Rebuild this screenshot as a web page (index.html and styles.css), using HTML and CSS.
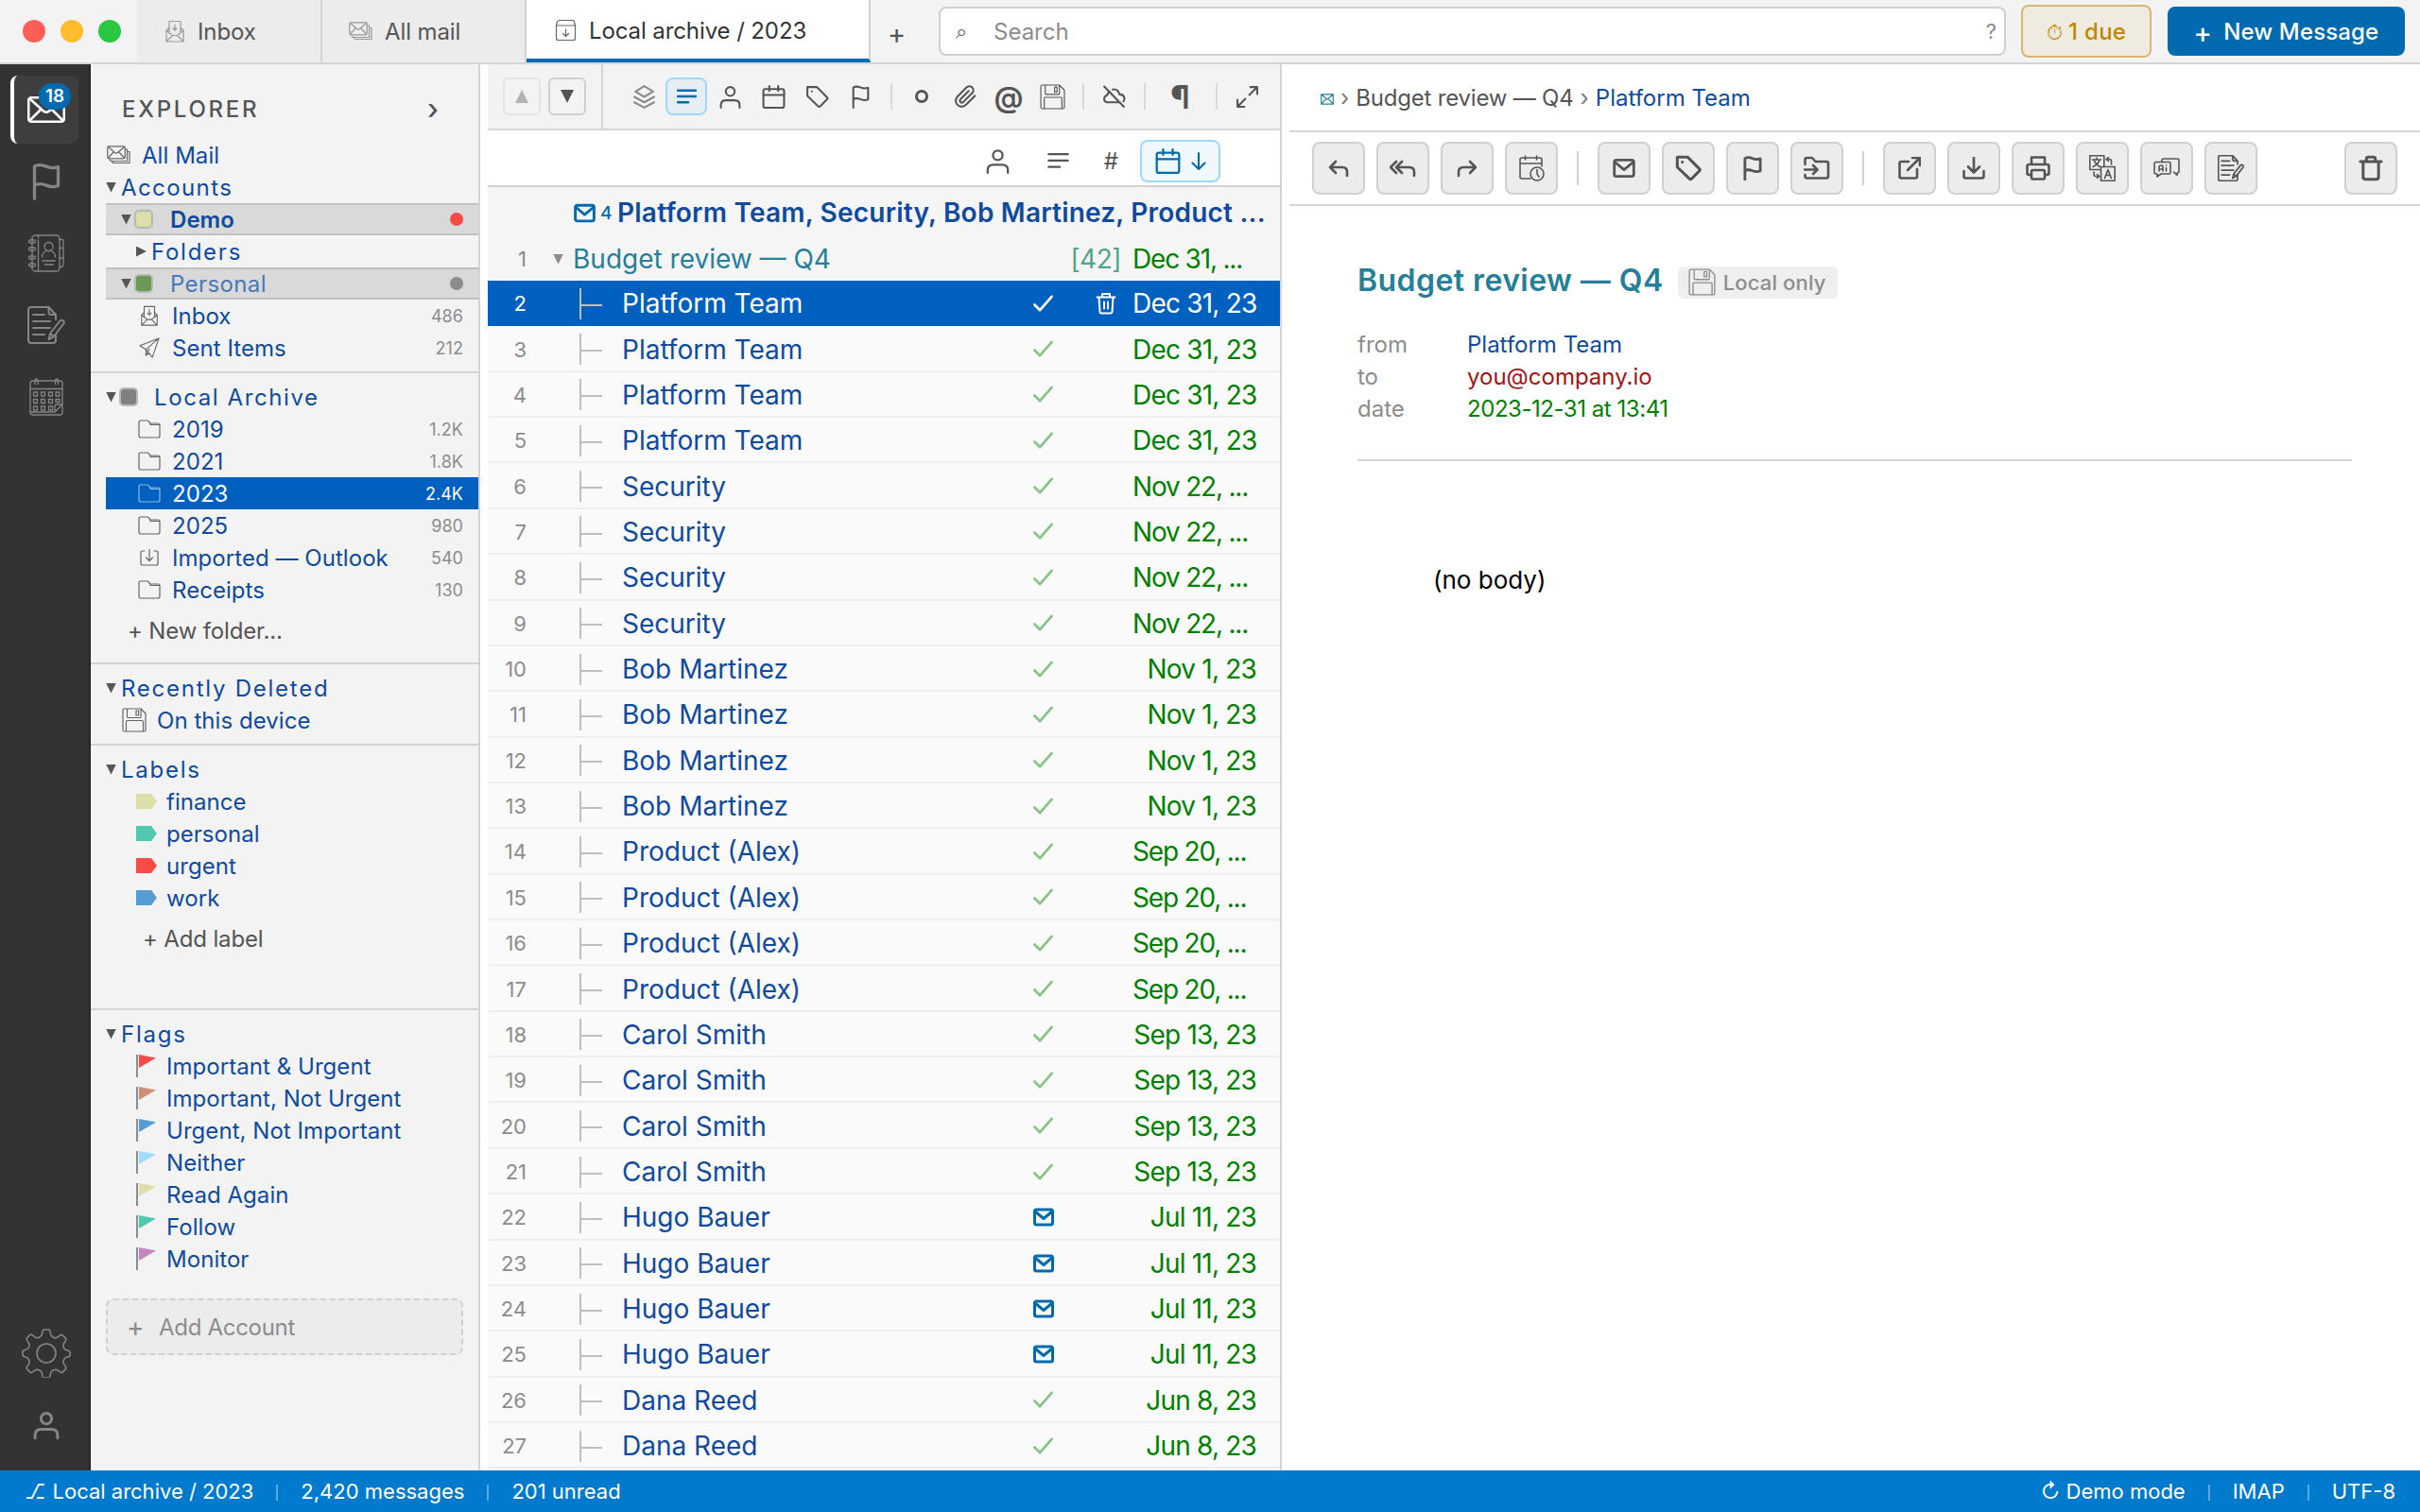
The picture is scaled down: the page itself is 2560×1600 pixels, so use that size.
FILE: index.html
```html
<!DOCTYPE html>
<html lang="en">
<head>
  <meta charset="UTF-8">
  <meta name="viewport" content="width=device-width, initial-scale=1.0">
  <title>Local archive / 2023</title>
  <link rel="stylesheet" href="styles.css">
</head>
<body>
  <!-- icon sprite -->
  <svg class="sprite" xmlns="http://www.w3.org/2000/svg">
    <symbol id="i-mail" viewBox="0 0 24 24"><rect x="2.500" y="4" width="19" height="16" rx="2"/><path d="M3 6l9 7.500L21 6"/></symbol>
    <symbol id="i-mailx" viewBox="0 0 13 11"><path d="M.7.7h11.600v9.600H.7zM.7.7l5.800 5 5.800-5M.7 10.300l4-4.500M12.300 10.300l-4-4.500"/></symbol>
    <symbol id="i-envelope" viewBox="0 0 40 28"><rect x="1.200" y="1.200" width="37.600" height="25.600" rx="3"/><path d="M2.500 2.500L17 15.500q3 2.400 6 0L37.500 2.500M2.500 25.500L14.500 13.500M37.500 25.500L25.500 13.500"/></symbol>
    <symbol id="i-flag" viewBox="0 0 24 24"><path d="M4.500 23V2.500c2-1.400 5-1 7.500 0s5 1.200 7.500.2v12c-2.500 1-5 .8-7.500-.2s-5.500-1.200-7.500 0"/></symbol>
    <symbol id="i-contacts" viewBox="0 0 40 40"><rect x="5" y="1" width="29" height="38" rx="3.500"/><path d="M11.500 1v3M11.500 6v33M34 5.500h2.500q1.500 0 1.500 1.500v6q0 1.500-1.500 1.500H34M38 14.500v9q0 1.500-1.500 1.500H34M38 24v8q0 2-2 2.500H34"/><rect x="1.500" y="6" width="7" height="3" rx="1.500"/><rect x="1.500" y="14" width="7" height="3" rx="1.500"/><rect x="1.500" y="23" width="7" height="3" rx="1.500"/><rect x="1.500" y="31" width="7" height="3" rx="1.500"/><circle cx="22.500" cy="13" r="4.500"/><path d="M15.500 24c0-4 2-5.500 4.500-6.500M29.500 24c0-4-2-5.500-4.500-6.500M16 28h13.500M18.500 32h9"/></symbol>
    <symbol id="i-notes" viewBox="0 0 40 40"><path d="M30 14V9l-7.500-8H4Q1 1 1 4v32q0 3 3 3h23q3 0 3-3v-5M22.500 1v5q0 3 3 3H30M6 9h12M6 16h18M6 23h18M6 30h12"/><path d="M24 29L34.500 15.500q1.500-1.500 3.200-.2t.6 3.200L28 32l-5.500 3zM24 29l4 3"/></symbol>
    <symbol id="i-calgrid" viewBox="0 0 36 40"><rect x="1" y="3" width="34" height="36" rx="2.500"/><path d="M1 11.500h34M6 6.500V3q0-2 1.500-2T9 3v3.500M27.500 6.500V3q0-2 1.500-2t1.500 2v3.500M1 36h26l8-8M27 36v-6q0-2 2-2h6"/><path d="M4.500 15h4v4h-4zM12.500 15h4v4h-4zM20.500 15h4v4h-4zM28 15h4v4h-4zM4.500 22.500h4v4h-4zM12.500 22.500h4v4h-4zM20.500 22.500h4v4h-4zM28 22.500h4v3h-4zM4.500 30h4v4h-4zM12.500 30h4v4h-4zM20.500 30h4v4h-4z"/></symbol>
    <symbol id="i-gear" viewBox="0 0 52 52"><circle cx="26" cy="26" r="10"/><path d="M21.500 5.500Q22 1 23.500 1h5q1.500 0 2 4.500.3 2.500 3 3.700 2.800 1.200 5-.6 3.500-2.800 4.600-1.700l3.600 3.600q1 1-1.700 4.500-1.800 2.300-.6 5 1.200 2.700 3.700 3 2.900.3 2.900 2v3q0 1.700-2.900 2-2.500.3-3.700 3-1.200 2.700.6 5 2.700 3.500 1.700 4.500l-3.600 3.600q-1.100 1.100-4.600-1.700-2.200-1.800-5-.6-2.700 1.200-3 3.700-.5 4.500-2 4.500h-5q-1.500 0-2-4.500-.3-2.500-3-3.700-2.800-1.200-5 .6-3.500 2.800-4.600 1.700l-3.600-3.600q-1-1 1.700-4.500 1.800-2.300.6-5-1.200-2.700-3.700-3Q1 29.200 1 27.500v-3q0-1.700 2.900-2 2.500-.3 3.700-3 1.200-2.700-.6-5-2.700-3.500-1.700-4.500l3.600-3.600Q10 5.300 13.500 8.600q2.200 1.800 5 .6 2.700-1.200 3-3.700z"/></symbol>
    <symbol id="i-person" viewBox="0 0 24 24"><circle cx="12" cy="6.500" r="4.500"/><path d="M2.500 23v-2.500q0-5 5-5h9q5 0 5 5V23"/></symbol>
    <symbol id="i-inbox" viewBox="0 0 20 24"><path d="M4 14V1.500h12V14M10 5v6M8 9l2 2.200L12 9M4 8.500L1 11v12h18V11l-3-2.500M1 11l6.500 5.500h5L19 11M1 23l6.500-6.500M19 23l-6.500-6.500"/></symbol>
    <symbol id="i-allmail" viewBox="0 0 26 20"><rect x=".8" y=".8" width="18.400" height="13" rx="1.500"/><path d="M1.500 1.500l7 6q1.500 1.200 3 0l7-6M1.500 13l5.500-6M18.500 13L13 7M19.500 4h2v12.500H5q-1.500 0-2-1.500M21.500 6.500H24v12H7.500q-1.500 0-2-1.500"/></symbol>
    <symbol id="i-archive" viewBox="0 0 24 24"><path d="M2 7h20v13.500q0 2-2 2H4q-2 0-2-2zM2 7l1-4q.5-1.500 2-1.500h14q1.500 0 2 1.500l1 4M12 11v7.500M9 15.500l3 3 3-3"/></symbol>
    <symbol id="i-plane" viewBox="0 0 24 24"><path d="M23 1L1 9.500l7 4.500L23 1l-7.500 22L8 14v7l4-3M8 21l4-7.500"/></symbol>
    <symbol id="i-folder" viewBox="0 0 24 20"><path d="M1 3q0-2 2-2h6.500q1 0 1.500.6L13 4h8q2 0 2 2v11q0 2-2 2H3q-2 0-2-2zM13 4v1.500h9.500"/></symbol>
    <symbol id="i-import" viewBox="0 0 20 18"><path d="M5 2H3Q1 2 1 4v11q0 2 2 2h14q2 0 2-2V4q0-2-2-2h-2M10 0v12M6.500 9l3.500 3.500L13.500 9"/></symbol>
    <symbol id="i-floppy" viewBox="0 0 26 26"><path d="M1 2.500Q1 1 2.500 1h17.500L25 6v17.500q0 1.500-1.500 1.500h-21Q1 25 1 23.500zM5.500 1v8.500q0 1 1 1H19q1 0 1-1V1M15 3h2.500v5H15zM4.500 25V14.500q0-1 1-1h16q1 0 1 1V25"/></symbol>
    <symbol id="i-layers" viewBox="0 0 24 24"><path d="M12 1l9 5.500-9 5.500L3 6.500zM2 12l10 5.500L22 12M2 17.500L12 23l10-5.500"/></symbol>
    <symbol id="i-lines" viewBox="0 0 24 24"><path d="M3 5.500h18M3 11.500h18M3 17.500h10.500"/></symbol>
    <symbol id="i-calendar" viewBox="0 0 24 24"><rect x="1.500" y="4" width="21" height="19" rx="2"/><path d="M1.500 10h21M7.500 1v5M16.500 1v5"/></symbol>
    <symbol id="i-tag" viewBox="0 0 24 24"><path d="M2 2h9.500L22 12.500q1 1 0 2L15 21.500q-1 1-2 0L2 11zM6.500 6.500h.1"/></symbol>
    <symbol id="i-clip" viewBox="0 0 24 24"><path d="M21.400 11l-9.200 9.200a6 6 0 0 1-8.500-8.500l9.200-9.200a4 4 0 0 1 5.700 5.700l-9.200 9.200a2 2 0 0 1-2.800-2.800l8.500-8.500"/></symbol>
    <symbol id="i-unlink" viewBox="0 0 24 24"><path d="M2 1.500L22 22M8 7Q5.500 7.500 5 10.500q-3 .5-3 3.500 0 3.500 3.500 3.500H17.500M10.500 4.500Q16 3.500 17.500 9.500q5 0 5 4.500 0 1.500-1 2.500"/></symbol>
    <symbol id="i-expand" viewBox="0 0 24 24"><path d="M15 2h7v7M22 2l-8 8M9 22H2v-7M2 22l8-8"/></symbol>
    <symbol id="i-down" viewBox="0 0 16 24"><path d="M8 4v17M1.500 14.500L8 21l6.500-6.500"/></symbol>
    <symbol id="i-check" viewBox="0 0 24 24"><path d="M2.500 13l6 6L21.500 4"/></symbol>
    <symbol id="i-trash" viewBox="0 0 24 24"><path d="M2.500 6h19M8 6V3.500Q8 2 9.500 2h5Q16 2 16 3.500V6M5 6v14q0 2 2 2h10q2 0 2-2V6"/></symbol>
    <symbol id="i-trashbars" viewBox="0 0 24 24"><path d="M2.500 5.500h19M8 5.500V2h8v3.500M4.500 5.500l1 15.500q.1 1.500 1.500 1.500h10q1.400 0 1.500-1.500l1-15.500M10 10.500v7M14 10.500v7"/></symbol>
    <symbol id="i-reply" viewBox="0 0 24 24"><path d="M9 5L3 11l6 6M3 11h13q5 0 5 5v4"/></symbol>
    <symbol id="i-replyall" viewBox="0 0 28 24"><path d="M13 5l-6 6 6 6M7 5l-6 6 6 6M7 11h14q5 0 5 5v4"/></symbol>
    <symbol id="i-forward" viewBox="0 0 24 24"><path d="M15 5l6 6-6 6M21 11H8q-5 0-5 5v4"/></symbol>
    <symbol id="i-calclock" viewBox="0 0 28 28"><path d="M25 12V5q0-2-2-2H4Q2 3 2 5v18q0 2 2 2h9M2 9h23M7.500 1v4M19.500 1v4"/><circle cx="20" cy="20" r="7"/><path d="M20 15.500V20l2 3"/></symbol>
    <symbol id="i-movefolder" viewBox="0 0 28 24"><path d="M1.500 8V3q0-2 2-2H9l3.500 4H24q2 0 2 2v13.500q0 2-2 2H3.500q-2 0-2-2V19M1 13.500h13M10 9l4.500 4.500L10 18"/></symbol>
    <symbol id="i-external" viewBox="0 0 24 24"><path d="M15 1h8v8M23 1L10 14M11 5H3.500q-2 0-2 2v13.500q0 2 2 2H18q2 0 2-2V13"/></symbol>
    <symbol id="i-download" viewBox="0 0 24 24"><path d="M12 1v15M6 10.500l6 6 6-6M1.500 15v5.500q0 2 2 2h17q2 0 2-2V15"/></symbol>
    <symbol id="i-print" viewBox="0 0 26 26"><path d="M6 9V1.500h14V9M6 20H3.500q-2 0-2-2v-7q0-2 2-2h19q2 0 2 2v7q0 2-2 2H20M6 16.500q0-1.500 1.500-1.500h11q1.500 0 1.500 1.500V23q0 1.500-1.500 1.500h-11Q6 24.500 6 23z"/></symbol>
    <symbol id="i-translate" viewBox="0 0 28 28"><path d="M12 15.500H.8V.8h15V12M12.500 12.500h14.700v14.700H12.500zM3.500 5h9M8 3v2M11 5q-1 4.500-7 7.500M5 5q1.500 5 6.500 7.500M19.500 4.500h2q2 0 2 2V10M20.500 2.500l-2.500 2 2.500 2M5 18v2.500q0 2 2 2h3.500M8.500 20.500l2.300 2-2.300 2"/><path d="M16.500 24.500l3.400-9 3.400 9M17.500 21.500h4.800"/></symbol>
    <symbol id="i-ai" viewBox="0 0 28 22"><path d="M9 4V2.500Q9 1 10.500 1h15Q27 1 27 2.500v12q0 1.500-1.500 1.500H25v2.500L21.500 15M2.500 4.500h14Q18 4.500 18 6v9.500q0 1.500-1.500 1.500H8l-4 3v-3H2.500Q1 17 1 15.500V6q0-1.500 1.500-1.500zM6 14V10q0-2 2-2t2 2v4M6 12h4M13.500 10.500V14M13.500 8h.1"/></symbol>
  </svg>

  <div class="app">
    <header class="topbar">
      <div class="lights"><i class="red"></i><i class="yellow"></i><i class="lime"></i></div>
      <nav class="tabs">
        <a class="tab tab-inbox"><svg class="ic"><use href="#i-inbox"/></svg><span>Inbox</span></a>
        <a class="tab tab-all"><svg class="ic"><use href="#i-allmail"/></svg><span>All mail</span></a>
        <a class="tab tab-active"><svg class="ic"><use href="#i-archive"/></svg><span>Local archive / 2023</span></a>
        <a class="tab-add">+</a>
      </nav>
      <div class="search"><span class="search-icon">⌕</span><span>Search</span><span class="search-help">?</span></div>
      <button class="due"><span class="due-icon">⏱</span>1 due</button>
      <button class="compose"><span class="plus">+</span>New Message</button>
    </header>

    <main class="main">
      <aside class="activity">
        <a class="act act-on"><svg class="a-mail"><use href="#i-envelope"/></svg><b class="count">18</b></a>
        <a class="act"><svg class="a-flag"><use href="#i-flag"/></svg></a>
        <a class="act"><svg class="a-contacts"><use href="#i-contacts"/></svg></a>
        <a class="act"><svg class="a-notes"><use href="#i-notes"/></svg></a>
        <a class="act"><svg class="a-cal"><use href="#i-calgrid"/></svg></a>
        <a class="act act-bottom"><svg class="a-gear"><use href="#i-gear"/></svg></a>
        <a class="act"><svg class="a-person"><use href="#i-person"/></svg></a>
      </aside>

      <aside class="explorer">
        <div class="ex-head"><span>EXPLORER</span><span class="ex-chev">›</span></div>
        <section class="ex-sec first">
          <div class="row allmail"><svg class="ic"><use href="#i-allmail"/></svg><span>All Mail</span></div>
          <div class="row head acc"><i class="tri"></i><span>Accounts</span></div>
          <div class="row account"><i class="tri"></i><i class="sq" style="background:#dcdfa8"></i><span class="bold">Demo</span><i class="dot" style="background:#f94a46"></i></div>
          <div class="row head sub"><i class="tri right"></i><span>Folders</span></div>
          <div class="row account dim"><i class="tri"></i><i class="sq" style="background:#6a9955"></i><span>Personal</span><i class="dot" style="background:#8c8c8c"></i></div>
          <div class="row item"><svg class="ic"><use href="#i-inbox"/></svg><span>Inbox</span><em>486</em></div>
          <div class="row item"><svg class="ic"><use href="#i-plane"/></svg><span>Sent Items</span><em>212</em></div>
        </section>
        <section class="ex-sec">
          <div class="row head"><i class="tri"></i><i class="sq" style="background:#808080"></i><span class="arch">Local Archive</span></div>
          <div class="row item"><svg class="ic"><use href="#i-folder"/></svg><span>2019</span><em>1.2K</em></div>
          <div class="row item"><svg class="ic"><use href="#i-folder"/></svg><span>2021</span><em>1.8K</em></div>
          <div class="row item on"><svg class="ic"><use href="#i-folder"/></svg><span>2023</span><em>2.4K</em></div>
          <div class="row item"><svg class="ic"><use href="#i-folder"/></svg><span>2025</span><em>980</em></div>
          <div class="row item"><svg class="ic imp"><use href="#i-import"/></svg><span>Imported — Outlook</span><em>540</em></div>
          <div class="row item"><svg class="ic"><use href="#i-folder"/></svg><span>Receipts</span><em>130</em></div>
          <div class="add">+ New folder...</div>
        </section>
        <section class="ex-sec">
          <div class="row head"><i class="tri"></i><span>Recently Deleted</span></div>
          <div class="row device"><svg class="ic"><use href="#i-floppy"/></svg><span>On this device</span></div>
        </section>
        <section class="ex-sec labels">
          <div class="row head"><i class="tri"></i><span>Labels</span></div>
          <div class="row mark"><i class="label" style="background:#dcdfa8"></i><span>finance</span></div>
          <div class="row mark"><i class="label" style="background:#4ec9b0"></i><span>personal</span></div>
          <div class="row mark"><i class="label" style="background:#f94a46"></i><span>urgent</span></div>
          <div class="row mark"><i class="label" style="background:#569cd6"></i><span>work</span></div>
          <div class="add">+ Add label</div>
        </section>
        <section class="ex-sec">
          <div class="row head"><i class="tri"></i><span>Flags</span></div>
          <div class="row mark"><i class="pole"><i style="background:#f94a46"></i></i><span>Important &amp; Urgent</span></div>
          <div class="row mark"><i class="pole"><i style="background:#ce9178"></i></i><span>Important, Not Urgent</span></div>
          <div class="row mark"><i class="pole"><i style="background:#569cd6"></i></i><span>Urgent, Not Important</span></div>
          <div class="row mark"><i class="pole"><i style="background:#9cdcfe"></i></i><span>Neither</span></div>
          <div class="row mark"><i class="pole"><i style="background:#dcdfa8"></i></i><span>Read Again</span></div>
          <div class="row mark"><i class="pole"><i style="background:#4ec9b0"></i></i><span>Follow</span></div>
          <div class="row mark"><i class="pole"><i style="background:#c586c0"></i></i><span>Monitor</span></div>
        </section>
        <div class="add-account"><span>+</span>Add Account</div>
      </aside>

      <section class="list">
        <div class="filters">
          <div class="nav-btns"><a class="off"><i class="tri up"></i></a><a><i class="tri"></i></a></div>
          <div class="filter-icons">
            <a class="muted"><svg><use href="#i-layers"/></svg></a>
            <a class="on"><svg><use href="#i-lines"/></svg></a>
            <a><svg><use href="#i-person"/></svg></a>
            <a><svg><use href="#i-calendar"/></svg></a>
            <a><svg><use href="#i-tag"/></svg></a>
            <a><svg><use href="#i-flag"/></svg></a>
            <hr>
            <a><i class="ring"></i></a>
            <a><svg><use href="#i-clip"/></svg></a>
            <a class="at">@</a>
            <a><svg class="fl"><use href="#i-floppy"/></svg></a>
            <hr>
            <a><svg><use href="#i-unlink"/></svg></a>
            <hr>
            <a class="para">¶</a>
            <hr>
            <a><svg><use href="#i-expand"/></svg></a>
          </div>
        </div>
        <div class="sorts">
          <a><svg><use href="#i-person"/></svg></a>
          <a class="s-lines"><svg><use href="#i-lines"/></svg></a>
          <a class="s-hash">#</a>
          <a class="s-date"><svg class="cal"><use href="#i-calendar"/></svg><svg class="arr"><use href="#i-down"/></svg></a>
        </div>
        <div class="thread-top">
          <svg><use href="#i-mail"/></svg><small>4</small><b>Platform Team, Security, Bob Martinez, Product ...</b>
        </div>
        <div class="thread-head">
          <span class="num">1</span><i class="tri"></i><span class="subj">Budget review — Q4</span><span class="total">[42]</span><span class="date cut">Dec 31, ...</span>
        </div>
        <div class="msgs" id="msgs"></div>
      </section>

      <section class="reader">
        <div class="crumbs"><svg class="c-mail"><use href="#i-mailx"/></svg><i>›</i><span class="c-subj">Budget review — Q4</span><i>›</i><span class="blue">Platform Team</span></div>
        <div class="actions">
          <a><svg><use href="#i-reply"/></svg></a>
          <a><svg class="w28"><use href="#i-replyall"/></svg></a>
          <a><svg><use href="#i-forward"/></svg></a>
          <a><svg class="w28 fine"><use href="#i-calclock"/></svg></a>
          <hr>
          <a><svg class="w26"><use href="#i-mail"/></svg></a>
          <a><svg class="w28"><use href="#i-tag"/></svg></a>
          <a><svg class="w26"><use href="#i-flag"/></svg></a>
          <a><svg class="w28"><use href="#i-movefolder"/></svg></a>
          <hr>
          <a><svg><use href="#i-external"/></svg></a>
          <a><svg><use href="#i-download"/></svg></a>
          <a><svg class="w26"><use href="#i-print"/></svg></a>
          <a><svg class="w28 fine"><use href="#i-translate"/></svg></a>
          <a><svg class="w28 fine"><use href="#i-ai"/></svg></a>
          <a><svg class="w28 note"><use href="#i-notes"/></svg></a>
          <a class="last"><svg class="w28"><use href="#i-trash"/></svg></a>
        </div>
        <article class="message">
          <div class="subject"><h1>Budget review — Q4</h1><span class="local"><svg><use href="#i-floppy"/></svg>Local only</span></div>
          <dl class="meta">
            <dt>from</dt><dd class="blue">Platform Team</dd>
            <dt>to</dt><dd class="maroon">you@company.io</dd>
            <dt>date</dt><dd class="when">2023-12-31 at 13:41</dd>
          </dl>
          <div class="body">(no body)</div>
        </article>
      </section>
    </main>

    <footer class="status">
      <span class="branch">⎇</span><span>Local archive / 2023</span><hr><span>2,420 messages</span><hr><span>201 unread</span>
      <span class="sync">↻</span><span>Demo mode</span><hr><span>IMAP</span><hr><span>UTF-8</span>
    </footer>
  </div>

  <script>
    const groups = [
      ['Platform Team', 4, 'Dec 31, 23'],
      ['Security', 4, 'Nov 22, ...'],
      ['Bob Martinez', 4, 'Nov 1, 23'],
      ['Product (Alex)', 4, 'Sep 20, ...'],
      ['Carol Smith', 4, 'Sep 13, 23'],
      ['Hugo Bauer', 4, 'Jul 11, 23', true],
      ['Dana Reed', 2, 'Jun 8, 23']
    ];
    let n = 2;
    let html = '';
    for (const [name, count, date, unread] of groups) {
      for (let i = 0; i < count; i++) {
        html += `<div class="msg${n === 2 ? ' on' : ''}">
          <span class="num">${n}</span><i class="branchline"></i><span class="name">${name}</span>
          <svg class="${unread ? 'unread' : 'read'}"><use href="#${unread ? 'i-mail' : 'i-check'}"/></svg>
          <span class="del">${n === 2 ? '<svg><use href="#i-trashbars"/></svg>' : ''}</span>
          <span class="date${date.endsWith('...') ? ' cut' : ''}">${date}</span></div>`;
        n++;
      }
    }
    document.getElementById('msgs').innerHTML = html;
  </script>
</body>
</html>
```
FILE: styles.css
```css
* {
  box-sizing: border-box;
}
body {
  margin: 0;
  font-family: Inter, "DejaVu Sans", sans-serif;
  font-size: 24px;
  color: #555;
  background: #fff;
}
svg {
  fill: none;
  stroke: currentColor;
  stroke-width: 2;
  stroke-linecap: round;
  stroke-linejoin: round;
  flex: none;
}
i, em {
  font-style: normal;
}
button {
  font-family: inherit;
}
.sprite {
  display: none;
}
.app {
  width: 2560px;
  height: 1600px;
  display: flex;
  flex-direction: column;
  overflow: hidden;
}

/* top bar */
.topbar {
  height: 68px;
  flex: none;
  display: flex;
  background: #f3f3f3;
  border-bottom: 2px solid #d4d4d4;
}
.lights {
  width: 145px;
  padding: 21px 0 0 24px;
  display: flex;
  gap: 16px;
}
.lights i {
  width: 24px;
  height: 24px;
  border-radius: 50%;
}
.red { background: #ff5f57; }
.yellow { background: #febc2e; }
.lime { background: #28c840; }
.tabs {
  display: flex;
  width: 848px;
}
.tab {
  display: flex;
  align-items: center;
  background: #ececec;
  border-right: 2px solid #d4d4d4;
  letter-spacing: -0.1px;
}
.tab .ic {
  color: #999;
}
.tab span {
  padding-top: 1px;
}
.tab-inbox {
  width: 196px;
  padding-left: 30px;
}
.tab-inbox .ic {
  width: 20px;
  height: 24px;
  margin-right: 14px;
}
.tab-all {
  width: 216px;
  padding-left: 28px;
}
.tab-all .ic {
  width: 26px;
  height: 20px;
  margin-right: 12px;
}
.tab-active {
  width: 364px;
  padding: 2px 0 0 29px;
  background: #fff;
  color: #333;
  border-bottom: 4px solid #006ab1;
}
.tab-active .ic {
  width: 25px;
  height: 24px;
  margin-right: 12px;
  color: #666;
}
.tab-add {
  padding: 18px 0 0 18px;
  font-size: 29px;
}
.ic {
  stroke-width: 1.2;
}
.search {
  width: 1129px;
  height: 52px;
  margin-top: 7px;
  border: 2px solid #d0d0d0;
  border-radius: 8px;
  background: #fff;
  display: flex;
  align-items: center;
  padding: 0 8px 0 16px;
  color: #8c8c8c;
}
.search-icon {
  width: 40px;
  font-size: 22px;
  color: #666;
}
.search-help {
  margin-left: auto;
  font-size: 22px;
}
.due {
  width: 138px;
  height: 56px;
  margin: 5px 0 0 16px;
  border: 2px solid #d6b873;
  border-radius: 8px;
  background: #f0ebe0;
  color: #bf8803;
  font-size: 24px;
  font-weight: 500;
  letter-spacing: 0.3px;
  padding: 0;
}
.due-icon {
  font-size: 22px;
  font-weight: 400;
  margin-right: 6px;
}
.compose {
  width: 251px;
  height: 52px;
  margin: 7px 0 0 17px;
  border: 0;
  border-radius: 8px;
  background: #006ab1;
  color: #fff;
  font-size: 24px;
  font-weight: 500;
  letter-spacing: 0.15px;
  padding: 0;
  display: flex;
  align-items: center;
  justify-content: center;
}
.plus {
  margin: 3px 12px 0 0;
  font-size: 29px;
}

.main {
  flex: 1;
  min-height: 0;
  display: flex;
}

/* activity bar */
.activity {
  width: 96px;
  flex: none;
  background: #333;
  border-right: 2px solid #252526;
  padding: 12px 0 12px 11px;
  display: flex;
  flex-direction: column;
  gap: 4px;
  color: #858585;
}
.act {
  position: relative;
  width: 72px;
  height: 72px;
  display: flex;
  align-items: center;
  justify-content: center;
  padding-left: 4px;
}
.act-on {
  background: #3e3e3e;
  border-left: 4px solid #fff;
  border-radius: 8px;
  color: #fff;
  padding-left: 0;
}
.act-bottom {
  margin-top: auto;
}
.count {
  position: absolute;
  left: 26px;
  top: 8px;
  width: 34px;
  height: 28px;
  border-radius: 14px;
  background: #006ab1;
  font-size: 19px;
  font-weight: 600;
  line-height: 28px;
  text-align: center;
}
.a-mail { width: 40px; height: 28px; stroke-width: 2.6; }
.a-flag { width: 40px; height: 40px; stroke-width: 2; }
.a-contacts { width: 40px; height: 40px; stroke-width: 1.3; }
.a-notes { width: 40px; height: 40px; stroke-width: 2; }
.a-cal { width: 36px; height: 40px; stroke-width: 1.3; }
.a-gear { width: 52px; height: 52px; stroke-width: 1.6; }
.a-person { width: 30px; height: 36px; stroke-width: 2.4; }

/* explorer */
.explorer {
  width: 412px;
  flex: none;
  background: #f3f3f3;
  border-right: 2px solid #d4d4d4;
}
.ex-head {
  height: 79px;
  padding: 15px 42px 0 33px;
  display: flex;
  align-items: center;
  justify-content: space-between;
  font-weight: 500;
  letter-spacing: 2.7px;
}
.ex-chev {
  font-size: 30px;
  letter-spacing: 0;
}
.ex-sec {
  border-top: 2px solid #d4d4d4;
  padding: 8px 0 8px 16px;
}
.ex-sec.first {
  border-top: 0;
  padding-top: 0;
}
.row {
  height: 34px;
  display: flex;
  align-items: center;
  color: #0f4a9e;
  letter-spacing: 0.05px;
  white-space: nowrap;
}
.row.head {
  letter-spacing: 1.75px;
}
.row.acc {
  letter-spacing: 1.4px;
}
.row.sub {
  padding-left: 32px;
}
.row .ic {
  color: #666;
}
.allmail .ic {
  width: 26px;
  height: 20px;
  margin: 0 11px 0 1px;
}
.tri {
  width: 11px;
  height: 11px;
  background: #555;
  clip-path: polygon(0 0, 100% 0, 50% 100%);
  margin-right: 5px;
  flex: none;
}
.tri.right {
  clip-path: polygon(0 0, 100% 50%, 0 100%);
}
.tri.up {
  clip-path: polygon(50% 0, 100% 100%, 0 100%);
}
.sq {
  width: 20px;
  height: 20px;
  margin-left: -2px;
  border: 2px solid #b8b8b8;
  border-radius: 5px;
  flex: none;
}
.account {
  background: #d9d9d9;
  border-top: 2px solid #c0c0c0;
  border-bottom: 2px solid #c0c0c0;
  padding: 0 16px;
}
.account span {
  margin-left: 18px;
}
.account.dim span {
  color: #4878b8;
  letter-spacing: 0.4px;
}
.bold {
  font-weight: 600;
}
.dot {
  width: 14px;
  height: 14px;
  border-radius: 50%;
  margin-left: auto;
}
.row .arch {
  margin-left: 17px;
  letter-spacing: 1.6px;
}
.item {
  padding: 0 16px 0 34px;
}
.item .ic {
  width: 24px;
  height: 22px;
  margin-right: 12px;
}
.item .imp {
  height: 18px;
}
.item em {
  margin-left: auto;
  font-size: 18px;
  color: #8c8c8c;
}
.item.on,
.item.on em {
  background: #0060c0;
  color: #fff;
}
.item.on .ic {
  color: #8db8e4;
}
.add {
  height: 52px;
  padding-left: 23px;
  line-height: 53px;
  letter-spacing: -0.15px;
}
.labels .add {
  padding-left: 39px;
  margin-bottom: 40px;
}
.device {
  padding-left: 17px;
}
.device .ic {
  width: 26px;
  height: 26px;
  margin-right: 11px;
}
.mark {
  padding-left: 32px;
}
.label {
  width: 22px;
  height: 16px;
  margin-right: 10px;
  clip-path: polygon(0 0, 73% 0, 100% 50%, 73% 100%, 0 100%);
}
.pole {
  width: 22px;
  height: 24px;
  margin-right: 10px;
  border-left: 2px solid #8c8c8c;
}
.pole i {
  display: block;
  width: 18px;
  height: 14px;
  margin-left: 1px;
  clip-path: polygon(0 0, 100% 25%, 0 100%);
}
.add-account {
  width: 378px;
  height: 60px;
  margin: 17px 0 0 16px;
  border: 2px dashed #d0d0d0;
  border-radius: 8px;
  background: #ececec;
  display: flex;
  align-items: center;
  padding-left: 20px;
  color: #8c8c8c;
  letter-spacing: -0.3px;
}
.add-account span {
  width: 34px;
  font-size: 28px;
}

/* message list */
.list {
  width: 840px;
  flex: none;
  margin-left: 8px;
  border-right: 2px solid #d4d4d4;
  overflow: hidden;
}
.filters {
  height: 70px;
  display: flex;
  background: #f3f3f3;
  border-bottom: 2px solid #d4d4d4;
}
.nav-btns {
  width: 122px;
  flex: none;
  display: flex;
  align-items: center;
  gap: 8px;
  padding-left: 16px;
  border-right: 2px solid #d4d4d4;
}
.nav-btns a {
  width: 40px;
  height: 40px;
  border: 2px solid #d0d0d0;
  border-radius: 6px;
  display: flex;
  align-items: center;
  justify-content: center;
}
.nav-btns .tri {
  margin: 0;
  width: 14px;
  height: 14px;
}
.nav-btns .off {
  opacity: 0.4;
}
.filter-icons {
  display: flex;
  align-items: center;
  padding-left: 20px;
}
.filter-icons a {
  width: 44px;
  height: 40px;
  margin-right: 2px;
  border: 2px solid transparent;
  border-radius: 8px;
  display: flex;
  align-items: center;
  justify-content: center;
  flex: none;
}
.filter-icons svg {
  width: 25px;
  height: 25px;
}
.filter-icons .fl {
  width: 27px;
  height: 27px;
  stroke-width: 1.1;
}
.filter-icons .on {
  background: #e6eef5;
  border-color: #9fd8fb;
  color: #006ab1;
}
.filter-icons .on svg {
  stroke-width: 2.4;
}
.filter-icons .muted {
  color: #8c8c8c;
  padding-left: 3px;
}
.filter-icons hr {
  width: 2px;
  height: 28px;
  margin: 0 9px 0 8px;
  border: 0;
  background: #d9d9d9;
  flex: none;
}
.ring {
  width: 14px;
  height: 14px;
  border: 3px solid #555;
  border-radius: 50%;
}
.filter-icons .at {
  font-size: 31px;
  font-weight: 600;
}
.filter-icons .para {
  width: 55px;
  font-size: 34px;
  font-weight: 700;
}
.sorts {
  height: 60px;
  display: flex;
  align-items: center;
  justify-content: flex-end;
  padding: 6px 63px 0 0;
  border-bottom: 2px solid #d0d0d0;
}
.sorts svg {
  width: 27px;
  height: 27px;
  display: block;
}
.s-lines {
  margin-left: 37px;
}
.s-hash {
  margin: 0 23px 0 35px;
}
.s-date {
  width: 85px;
  height: 45px;
  border: 2px solid #9fd8fb;
  border-radius: 8px;
  background: #f0f8fe;
  color: #006ab1;
  display: flex;
  align-items: center;
  justify-content: center;
  gap: 11px;
}
.sorts .arr {
  width: 16px;
  height: 24px;
}
.thread-top,
.thread-head {
  background: #f5f5f5;
  display: flex;
  align-items: center;
  font-size: 28px;
  white-space: nowrap;
}
.thread-top {
  height: 51px;
  padding: 3px 0 0 90px;
  color: #0f4a9e;
}
.thread-top svg {
  width: 25px;
  height: 25px;
  color: #006ab1;
  stroke-width: 2.8;
}
.thread-top small {
  width: 22px;
  padding-left: 4px;
  font-size: 19px;
  font-weight: 500;
  color: #006ab1;
}
.thread-top b {
  font-weight: 600;
  letter-spacing: 0.22px;
}
.thread-head {
  height: 48px;
  padding-top: 2px;
}
.num {
  width: 41px;
  text-align: right;
  font-size: 22px;
  color: #8c8c8c;
}
.thread-head .tri {
  margin: 0 10px 0 28px;
  background: #8c8c8c;
}
.subj {
  color: #267f99;
}
.total {
  margin-left: auto;
  color: #4fa58b;
  letter-spacing: -0.5px;
}
.date {
  width: 131px;
  flex: none;
  margin: 0 25px 0 12px;
  text-align: right;
  color: #008000;
  white-space: nowrap;
  letter-spacing: -0.8px;
}
.date.cut {
  text-align: left;
  letter-spacing: -1.2px;
}
.msg {
  height: 48.36px;
  padding-top: 2px;
  display: flex;
  align-items: center;
  background: #fafafa;
  border-bottom: 2px solid #eee;
  font-size: 28px;
  color: #0f4a9e;
}
.branchline {
  width: 24px;
  height: 33px;
  margin: 0 21px 0 56px;
  border-left: 2px solid #bfbfbf;
  background: linear-gradient(#bfbfbf, #bfbfbf) 0 55% / 24px 2px no-repeat;
}
.name {
  flex: 1;
}
.msg > svg {
  width: 24px;
  height: 24px;
}
.msg .read {
  width: 23px;
  height: 23px;
  margin-right: 1px;
}
.read {
  color: #86c486;
  stroke-width: 2.8;
}
.unread {
  color: #006ab1;
  stroke-width: 3;
}
.del {
  width: 70px;
  padding-left: 42px;
}
.del svg {
  width: 24px;
  height: 24px;
  display: block;
}
.msg.on,
.msg.on .num,
.msg.on .date,
.msg.on .read {
  background: #0060c0;
  border-color: #0060c0;
  color: #fff;
}

/* reader */
.reader {
  flex: 1;
  min-width: 0;
  padding-left: 8px;
}
.crumbs {
  height: 72px;
  display: flex;
  align-items: center;
  padding-left: 33px;
  border-bottom: 2px solid #d4d4d4;
}
.crumbs i {
  margin: 0 7px;
  color: #777;
}
.c-mail {
  width: 14px;
  height: 12px;
  margin-top: 3px;
  color: #267f99;
  stroke-width: 1.1;
}
.c-subj {
  letter-spacing: -0.2px;
}
.blue { color: #0f4a9e; }
.maroon { color: #a31515; }
.when {
  color: #008000;
  letter-spacing: -0.45px;
}
.actions {
  height: 78px;
  display: flex;
  align-items: center;
  gap: 12px;
  padding: 0 24px;
  border-bottom: 2px solid #d4d4d4;
}
.actions a {
  width: 56px;
  height: 56px;
  border: 2px solid #d0d0d0;
  border-radius: 8px;
  background: #ececec;
  display: flex;
  align-items: center;
  justify-content: center;
}
.actions svg {
  width: 24px;
  height: 24px;
  stroke-width: 2.6;
}
.actions .w26 {
  width: 26px;
  height: 26px;
}
.actions .w28 {
  width: 28px;
  height: 28px;
}
.actions .fine {
  stroke-width: 1.6;
}
.actions .note {
  stroke-width: 2.5;
}
.actions hr {
  width: 2px;
  height: 36px;
  margin: 0 8px;
  border: 0;
  background: #d0d0d0;
}
.actions .last {
  margin-left: auto;
}
.message {
  padding: 53px 72px 0;
}
.subject {
  height: 50px;
  display: flex;
  align-items: center;
}
h1 {
  margin: 0;
  font-size: 32px;
  font-weight: 600;
  letter-spacing: 0.43px;
  color: #267f99;
}
.local {
  height: 34px;
  margin: 5px 0 0 15px;
  padding: 0 12px 0 11px;
  border-radius: 6px;
  background: #efefef;
  color: #8c8c8c;
  font-size: 22px;
  font-weight: 500;
  letter-spacing: 0.15px;
  display: flex;
  align-items: center;
  gap: 8px;
}
.local svg {
  width: 29px;
  height: 29px;
  stroke-width: 1.2;
}
.meta {
  margin: 0;
  padding: 27px 0 36px;
  border-bottom: 2px solid #d4d4d4;
  display: grid;
  grid-template-columns: 116px 1fr;
  line-height: 34px;
}
.meta dt {
  color: #8c8c8c;
}
.meta dd {
  margin: 0;
}
.body {
  padding: 110px 0 0 80px;
  font-size: 26px;
  color: #000;
}

/* status bar */
.status {
  height: 44px;
  flex: none;
  display: flex;
  align-items: center;
  padding: 0 26px;
  background: #007acc;
  color: #fff;
  font-size: 22px;
}
.status hr {
  width: 2px;
  height: 17px;
  margin: 2px 24px 0;
  border: 0;
  background: #5aa9de;
}
.branch {
  margin-right: 7px;
}
.sync {
  margin: 0 6px 0 auto;
}
```
